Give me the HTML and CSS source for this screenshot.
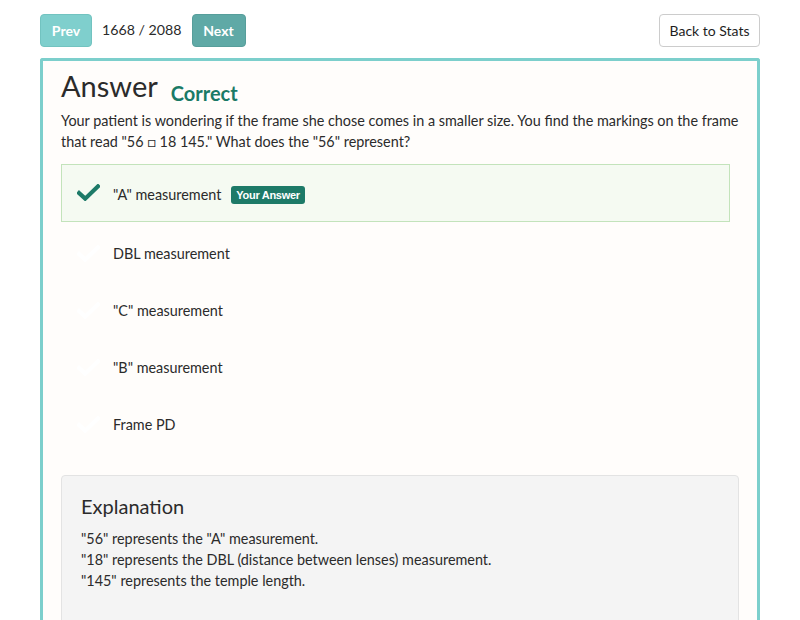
FILE: index.html
```html
<!DOCTYPE html>
<html>
<head>
<meta charset="utf-8">
<link rel="stylesheet" href="styles.css">
</head>
<body>
<div class="page">
  <div class="topbar">
    <div class="nav">
      <button class="btn btn-prev">Prev</button>
      <span class="counter">1668 / 2088</span>
      <button class="btn btn-next">Next</button>
    </div>
    <button class="btn btn-back">Back to Stats</button>
  </div>
  <div class="panel">
    <div class="title-row">
      <h1 class="title">Answer</h1>
      <span class="status">Correct</span>
    </div>
    <p class="question">Your patient is wondering if the frame she chose comes in a smaller size. You find the markings on the frame that read "56 &#9633; 18 145." What does the "56" represent?</p>
    <ul class="choices">
      <li class="choice chosen">
        <svg class="check" viewBox="0 0 24 18"><path d="M2 9.5 L8.5 15.5 L22 2.5" fill="none" stroke="currentColor" stroke-width="4.4" stroke-linecap="square"/></svg>
        <span class="choice-text">"A" measurement</span>
        <span class="badge">Your Answer</span>
      </li>
      <li class="choice">
        <svg class="check faint" viewBox="0 0 24 18"><path d="M2 9.5 L8.5 15.5 L22 2.5" fill="none" stroke="currentColor" stroke-width="4.4" stroke-linecap="square"/></svg>
        <span class="choice-text">DBL measurement</span>
      </li>
      <li class="choice">
        <svg class="check faint" viewBox="0 0 24 18"><path d="M2 9.5 L8.5 15.5 L22 2.5" fill="none" stroke="currentColor" stroke-width="4.4" stroke-linecap="square"/></svg>
        <span class="choice-text">"C" measurement</span>
      </li>
      <li class="choice">
        <svg class="check faint" viewBox="0 0 24 18"><path d="M2 9.5 L8.5 15.5 L22 2.5" fill="none" stroke="currentColor" stroke-width="4.4" stroke-linecap="square"/></svg>
        <span class="choice-text">"B" measurement</span>
      </li>
      <li class="choice">
        <svg class="check faint" viewBox="0 0 24 18"><path d="M2 9.5 L8.5 15.5 L22 2.5" fill="none" stroke="currentColor" stroke-width="4.4" stroke-linecap="square"/></svg>
        <span class="choice-text">Frame PD</span>
      </li>
    </ul>
    <div class="explanation">
      <h2 class="exp-title">Explanation</h2>
      <p class="exp-text">"56" represents the "A" measurement.<br>"18" represents the DBL (distance between lenses) measurement.<br>"145" represents the temple length.</p>
    </div>
  </div>
</div>
</body>
</html>
```
FILE: styles.css
```css
html, body {
  margin: 0;
  padding: 0;
  background: #ffffff;
  overflow: hidden;
}
body {
  font-family: Lato, "Open Sans", sans-serif;
  color: #2b2b2b;
  font-size: 14.4px;
}
.page {
  padding: 14px 40px 0 40px;
}
.topbar {
  display: flex;
  justify-content: space-between;
  align-items: center;
  height: 33px;
}
.nav {
  display: flex;
  align-items: center;
}
.btn {
  font-family: Lato, sans-serif;
  height: 33px;
  border-radius: 4px;
  font-size: 14px;
  padding: 0 12px;
  cursor: pointer;
}
.btn-prev {
  background: #7fcfcd;
  border: 1px solid #72c3c0;
  color: #ffffff;
  font-weight: 700;
  width: 52px;
  padding: 0;
}
.btn-next {
  background: #5fa9a6;
  border: 1px solid #579e9b;
  color: #ffffff;
  font-weight: 700;
  width: 54px;
  padding: 0;
}
.counter {
  font-size: 14.2px;
  color: #2b2b2b;
  margin: 0 10px 0 10px;
  position: relative;
  top: -1px;
}
.btn-back {
  background: #ffffff;
  border: 1px solid #cccccc;
  color: #1e1e1e;
  width: 101px;
  padding: 0;
}
.panel {
  margin-top: 11px;
  border: 3px solid #7ccfcc;
  border-bottom: none;
  border-radius: 3px 3px 0 0;
  background: #fffdfb;
  padding: 8px 18px 40px 18px;
  height: 600px;
}
.title-row {
  display: flex;
  align-items: baseline;
}
.title {
  font-size: 29px;
  font-weight: 400;
  margin: 0;
  line-height: 34px;
  color: #2b2b2b;
}
.status {
  font-size: 20px;
  font-weight: 700;
  color: #1a7a66;
  margin-left: 13px;
  position: relative;
  top: 4px;
}
.question {
  margin: 7px 0 0 0;
  font-size: 14.4px;
  line-height: 21px;
  color: #2b2b2b;
}
.choices {
  list-style: none;
  margin: 12px 9px 0 0;
  padding: 0;
}
.choice {
  display: flex;
  align-items: center;
  height: 57px;
  padding-left: 15px;
  padding-top: 5px;
  border: 1px solid transparent;
  box-sizing: border-box;
}
.choice.chosen {
  background: #f5faf2;
  border-color: #c3e3bb;
  height: 58px;
  padding-top: 3px;
}
.check {
  width: 23px;
  height: 17px;
  color: #1d7a68;
  flex: none;
}
.choice.chosen .check {
  position: relative;
  top: -2px;
}
.check.faint {
  color: #ffffff;
}
.choice-text {
  margin-left: 13px;
  font-size: 14.4px;
  color: #2b2b2b;
}
.badge {
  margin-left: 10px;
  background: #1d7a68;
  color: #ffffff;
  font-family: "Liberation Sans", Arial, sans-serif;
  font-weight: 700;
  font-size: 11px;
  letter-spacing: -0.3px;
  padding: 3px 5px;
  border-radius: 3px;
  line-height: 12px;
}
.explanation {
  margin-top: 25px;
  background: #f4f4f4;
  border: 1px solid #e3e3e3;
  border-radius: 4px;
  padding: 17px 19px 40px 19px;
  height: 200px;
}
.exp-title {
  margin: 0;
  font-size: 20px;
  font-weight: 400;
  line-height: 26px;
  color: #2b2b2b;
}
.exp-text {
  margin: 9px 0 0 0;
  font-size: 14.4px;
  line-height: 21px;
  color: #2b2b2b;
}
```
